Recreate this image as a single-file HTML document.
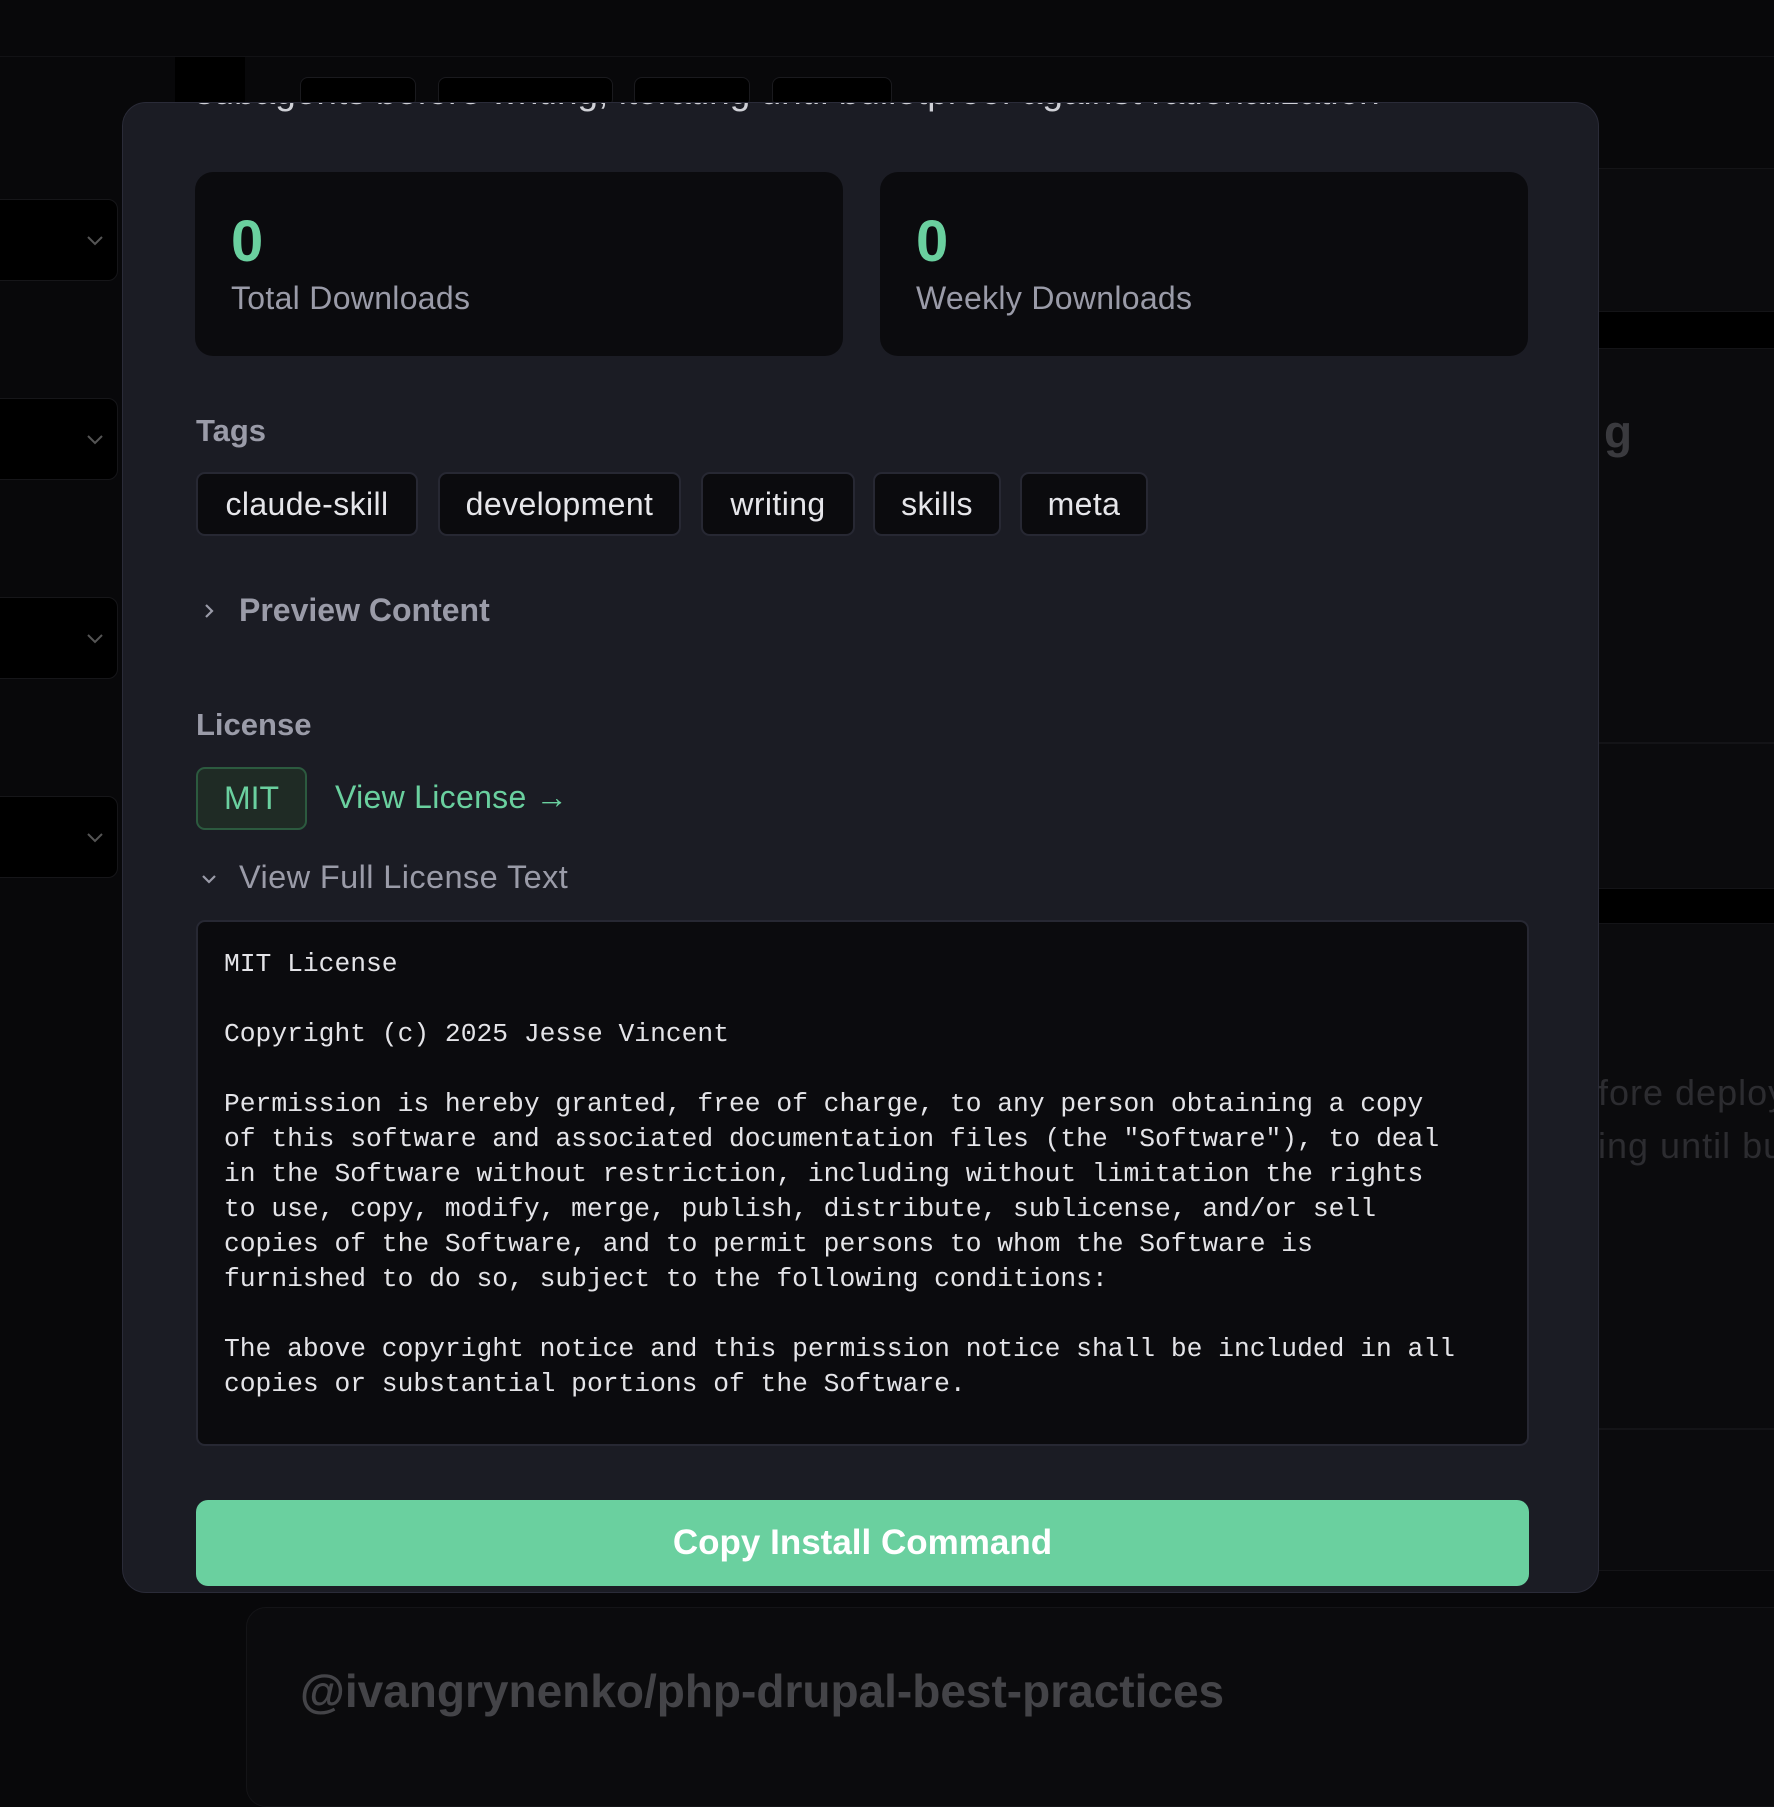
<!DOCTYPE html>
<html><head><meta charset="utf-8"><style>
*{margin:0;padding:0;box-sizing:border-box}
body{width:1774px;height:1744px;background:#08080a;position:relative;overflow:hidden;font-family:"Liberation Sans",sans-serif}
.a{position:absolute}
.bgp{position:absolute;background:#0b0b0d;border:1px solid #141417}
.dd{position:absolute;left:-10px;width:128px;height:82px;background:#000;border:1px solid #161619;border-radius:10px}
.dd svg{position:absolute;right:12px;top:33px}
.modal{position:absolute;left:122px;top:102px;width:1477px;height:1491px;background:#1b1c24;border:1px solid #2a2b38;border-radius:24px;overflow:hidden}
.card{position:absolute;top:69px;width:648px;height:184px;background:#0b0b0e;border-radius:18px}
.num{position:absolute;left:36px;top:36px;font-size:58px;font-weight:bold;color:#6ad09f}
.lbl{position:absolute;left:36px;top:108px;font-size:32px;color:#9a9ba8;letter-spacing:0.3px}
.h{position:absolute;left:73px;font-size:31px;font-weight:bold;color:#9a9ba8}
.tag{position:absolute;top:369px;height:64px;background:#0b0b0e;border:2px solid #272833;border-radius:9px;color:#e6e6ea;font-size:32px;line-height:60px;text-align:center;letter-spacing:0.4px}
pre{font-family:"Liberation Mono",monospace;font-size:26.3px;line-height:35px;color:#e4e4e8}
</style></head><body>
<div class="a" style="left:0;top:0;width:1774px;height:57px;background:#08080a;border-bottom:1px solid #121215"></div>
<div class="a" style="left:175px;top:57px;width:70px;height:60px;background:#000"></div>
<div class="a" style="left:300px;top:77px;width:116px;height:30px;background:#000;border:1px solid #1a1a1e;border-radius:8px"></div>
<div class="a" style="left:438px;top:77px;width:175px;height:30px;background:#000;border:1px solid #1a1a1e;border-radius:8px"></div>
<div class="a" style="left:634px;top:77px;width:116px;height:30px;background:#000;border:1px solid #1a1a1e;border-radius:8px"></div>
<div class="a" style="left:772px;top:77px;width:120px;height:30px;background:#000;border:1px solid #1a1a1e;border-radius:8px"></div>
<div class="dd" style="top:199px"><svg width="20" height="14"><path d="M3 4l7 7 7-7" stroke="#555" stroke-width="2" fill="none"/></svg></div>
<div class="dd" style="top:398px"><svg width="20" height="14"><path d="M3 4l7 7 7-7" stroke="#555" stroke-width="2" fill="none"/></svg></div>
<div class="dd" style="top:597px"><svg width="20" height="14"><path d="M3 4l7 7 7-7" stroke="#555" stroke-width="2" fill="none"/></svg></div>
<div class="dd" style="top:796px"><svg width="20" height="14"><path d="M3 4l7 7 7-7" stroke="#555" stroke-width="2" fill="none"/></svg></div>
<div class="bgp" style="left:1560px;top:168px;width:240px;height:144px"></div>
<div class="a" style="left:1560px;top:312px;width:240px;height:36px;background:#000"></div>
<div class="bgp" style="left:1560px;top:348px;width:240px;height:395px"></div>
<div class="bgp" style="left:1560px;top:743px;width:240px;height:146px"></div>
<div class="a" style="left:1560px;top:889px;width:240px;height:34px;background:#000"></div>
<div class="bgp" style="left:1560px;top:923px;width:240px;height:506px"></div>
<div class="bgp" style="left:1560px;top:1429px;width:240px;height:142px"></div>
<div class="a" style="left:1604px;top:405px;font-size:46px;font-weight:bold;color:#3a3a3e">g</div>
<div class="a" style="left:1598px;top:1066px;font-size:36px;color:#2c2c30;letter-spacing:1px;line-height:53px;white-space:nowrap">fore deploy<br>ing until bu</div>
<div class="a" style="left:246px;top:1607px;width:1600px;height:200px;background:#0b0b0d;border:1px solid #141417;border-radius:20px"></div>
<div class="a" style="left:300px;top:1664px;font-size:46px;font-weight:bold;color:#444448">@ivangrynenko/php-drupal-best-practices</div>
<div class="modal">
<div class="a" style="left:72px;top:-32px;font-size:37px;color:#cfd0d6;white-space:nowrap">subagents before writing, iterating until bulletproof against rationalization</div>
<div class="card" style="left:72px"><div class="num">0</div><div class="lbl">Total Downloads</div></div>
<div class="card" style="left:757px"><div class="num">0</div><div class="lbl">Weekly Downloads</div></div>
<div class="h" style="top:310px">Tags</div>
<div class="tag" style="left:73px;width:222px">claude-skill</div>
<div class="tag" style="left:315px;width:243px">development</div>
<div class="tag" style="left:578px;width:154px">writing</div>
<div class="tag" style="left:750px;width:128px">skills</div>
<div class="tag" style="left:897px;width:128px">meta</div>
<svg class="a" style="left:78px;top:498px" width="16" height="20"><path d="M5 4l6 6-6 6" stroke="#9a9ba8" stroke-width="2.2" fill="none"/></svg>
<div class="h" style="left:116px;top:489px;font-size:32px">Preview Content</div>
<div class="h" style="top:604px">License</div>
<div class="a" style="left:73px;top:664px;width:111px;height:63px;background:#1f2b25;border:2px solid #2c5a3f;border-radius:9px;color:#6ad09f;font-size:32px;line-height:59px;text-align:center">MIT</div>
<div class="a" style="left:212px;top:676px;font-size:32px;color:#6ad09f;letter-spacing:0.3px">View License →</div>
<svg class="a" style="left:76px;top:768px" width="20" height="16"><path d="M4 5l6 6 6-6" stroke="#9a9ba8" stroke-width="2.2" fill="none"/></svg>
<div class="a" style="left:116px;top:756px;font-size:32.5px;color:#9a9ba8;letter-spacing:0.4px">View Full License Text</div>
<div class="a" style="left:73px;top:817px;width:1333px;height:526px;background:#0b0b0e;border:2px solid #272833;border-radius:9px;padding:25px 0 0 26px">
<pre>MIT License

Copyright (c) 2025 Jesse Vincent

Permission is hereby granted, free of charge, to any person obtaining a copy
of this software and associated documentation files (the "Software"), to deal
in the Software without restriction, including without limitation the rights
to use, copy, modify, merge, publish, distribute, sublicense, and/or sell
copies of the Software, and to permit persons to whom the Software is
furnished to do so, subject to the following conditions:

The above copyright notice and this permission notice shall be included in all
copies or substantial portions of the Software.</pre></div>
<div class="a" style="left:73px;top:1397px;width:1333px;height:86px;background:#6ad09f;border-radius:12px;color:#fff;font-size:35px;font-weight:bold;text-align:center;line-height:86px">Copy Install Command</div>
</div>
</body></html>
